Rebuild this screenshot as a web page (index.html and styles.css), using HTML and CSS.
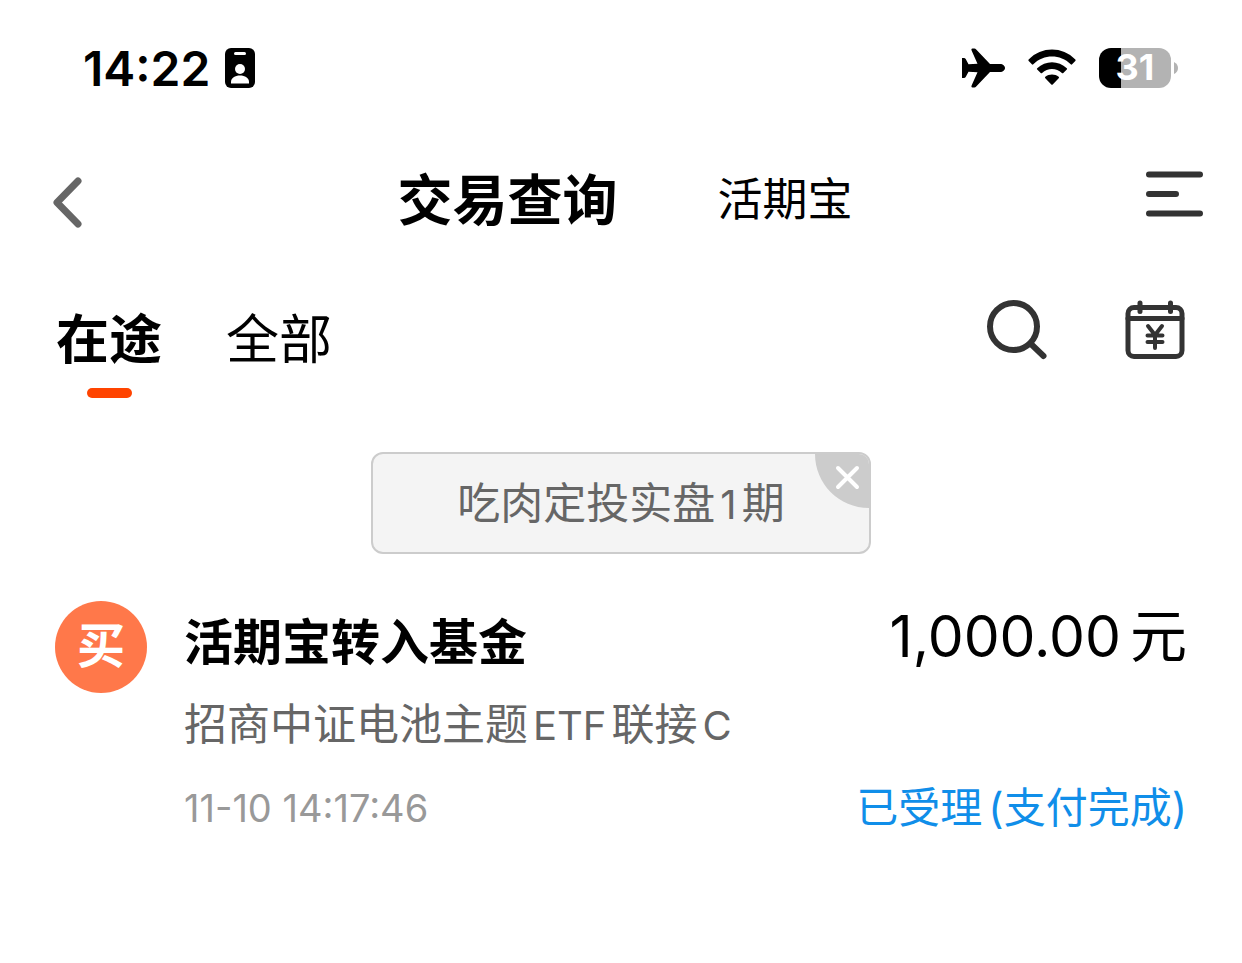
FILE: index.html
```html
<!DOCTYPE html>
<html lang="zh-CN">
<head>
<meta charset="utf-8">
<meta name="viewport" content="width=device-width, initial-scale=1">
<title>交易查询</title>
<link rel="stylesheet" href="styles.css">
</head>
<body>
<div class="status-bar">
  <div class="status-left">
    <time class="clock">14:22</time>
    <svg width="30" height="40" viewBox="0 0 30 40" aria-hidden="true">
      <rect width="30" height="40" rx="6"/>
      <rect x="9" y="4" width="12" height="3" rx="1.5" fill="#fff"/>
      <circle cx="15" cy="21" r="5" fill="#fff"/>
      <path d="M6 35.500V34c0-4 4-6.500 9-6.500s9 2.500 9 6.500v1.500z" fill="#fff"/>
    </svg>
  </div>
  <div class="status-right">
    <svg width="44" height="40" viewBox="0 0 44 40" aria-hidden="true">
      <path d="M1 10h2q1 0 1.700.9L7.500 16.200l9-.4L10.600 2.400Q9.800.5 11.400.5h2q1 0 1.800.9L29 16h10c3 0 5 2.100 5 4s-2 4-5 4H29L15.200 38.600q-.8.900-1.800.9h-2q-1.600 0-.8-1.900L16.500 24.200l-9-.4L4.700 29Q4 30 3 30H1z"/>
    </svg>
    <svg width="48" height="38" viewBox="0 0 48 38" aria-hidden="true">
      <path d="M.7 10.500C13.500-2.800 34.500-2.800 47.300 10.500q.7.700 0 1.400l-3.200 3.400q-.7.700-1.400 0C32.300 5 15.700 5 5.300 15.300q-.7.700-1.400 0L.7 11.900q-.7-.7 0-1.400z"/>
      <path d="M9.200 19.200c8.200-8 21.400-8 29.600 0q.7.700 0 1.400L35.300 24q-.7.700-1.400 0c-5.500-5.200-14.300-5.200-19.800 0q-.7.700-1.400 0l-3.500-3.400q-.7-.7 0-1.400z"/>
      <path d="M17.300 27.800c3.800-3.200 9.600-3.200 13.400 0q.7.700 0 1.400l-6 6.300q-.7.700-1.400 0l-6-6.300q-.7-.7 0-1.400z"/>
    </svg>
    <div class="battery">
      <div class="battery-body"><span>31</span></div>
      <svg width="4" height="12" viewBox="0 0 4 12" aria-hidden="true"><path d="M0 0q4 2 4 6t-4 6z" fill="#b3b3b3"/></svg>
    </div>
  </div>
</div>

<header class="nav">
  <button class="icon-button back" aria-label="返回">
    <svg width="30" height="52" viewBox="0 0 30 52" fill="none" stroke="#666" stroke-width="7" stroke-linecap="round" stroke-linejoin="round"><path d="M26 4 5 25.500 26 47"/></svg>
  </button>
  <div class="nav-titles">
    <h1>交易查询</h1>
    <a href="#">活期宝</a>
  </div>
  <button class="icon-button menu" aria-label="菜单">
    <svg width="58" height="46" viewBox="0 0 58 46" fill="none" stroke="#333" stroke-width="6" stroke-linecap="round"><path d="M3 3.500h51M3 23h27M3 42.500h51"/></svg>
  </button>
</header>

<div class="toolbar">
  <nav class="tabs">
    <button class="tab active">在途</button>
    <button class="tab">全部</button>
  </nav>
  <div class="tools">
    <button class="icon-button" aria-label="搜索">
      <svg width="62" height="60" viewBox="0 0 62 60" fill="none" stroke="#333" stroke-width="6" stroke-linecap="round"><circle cx="27.500" cy="26.500" r="23.500"/><path d="m45 44 12.500 12"/></svg>
    </button>
    <button class="icon-button" aria-label="交易日历">
      <svg width="60" height="60" viewBox="0 0 60 60" fill="none" stroke="#333" stroke-width="5" stroke-linecap="round"><rect x="3" y="7.500" width="54" height="49" rx="6"/><path d="M3 18.500h54M15 3v8.500M45.500 3v8.500"/><path stroke-width="4" d="m23 26 7 9 7-9M30 35v13M22.500 35.500h15M22.500 42h15"/></svg>
    </button>
  </div>
</div>

<main>
  <div class="chip">
    <button class="chip-label">吃肉定投实盘<span class="latin">1</span>期</button>
    <button class="chip-close" aria-label="关闭">
      <svg width="54" height="54" viewBox="0 0 54 54" fill="none"><path d="M0 0h54v54C24 54 0 30 0 0z" fill="#ccc"/><path d="m23 14 19 19M42 14 23 33" stroke="#fff" stroke-width="4" stroke-linecap="round"/></svg>
    </button>
  </div>

  <article class="record">
    <span class="badge">买</span>
    <div class="details">
      <div class="row summary">
        <h2>活期宝转入基金</h2>
        <span class="amount"><span>1,000.00</span><span class="unit">元</span></span>
      </div>
      <p class="fund">招商中证电池主题<span class="latin">ETF</span>联接<span class="latin">C</span></p>
      <div class="row">
        <time class="date">11-10 14:17:46</time>
        <span class="state"><span>已受理</span><span>(支付完成)</span></span>
      </div>
    </div>
  </article>
</main>
</body>
</html>
```
FILE: styles.css
```css
* {
  box-sizing: border-box;
}

body {
  margin: 0;
  background: #fff;
  color: #000;
  font-family: Inter, "Noto Sans CJK SC", sans-serif;
}

h1,
h2,
p {
  margin: 0;
}

button {
  margin: 0;
  padding: 0;
  border: 0;
  background: none;
  color: inherit;
  font: inherit;
  cursor: pointer;
}

svg {
  display: block;
}

.status-bar {
  display: flex;
  justify-content: space-between;
  align-items: center;
  height: 136px;
  padding: 0 64px 0 83px;
}

.status-left {
  display: flex;
  align-items: center;
  gap: 15px;
}

.clock {
  font-size: 48px;
  font-weight: 600;
}

.status-right {
  display: flex;
  align-items: center;
  gap: 23px;
}

.battery {
  display: flex;
  align-items: center;
  gap: 3px;
}

.battery-body {
  width: 72px;
  height: 40px;
  border-radius: 12px;
  background: linear-gradient(to right, #000 31%, #b3b3b3 31%);
  color: #fff;
  font-size: 36px;
  font-weight: 700;
  line-height: 38px;
  text-align: center;
}

.nav {
  display: grid;
  grid-template-columns: 1fr auto 1fr;
  align-items: center;
  height: 124px;
  padding: 0 38px 0 52px;
}

.back {
  justify-self: start;
  padding-top: 9px;
}

.menu {
  justify-self: end;
  padding-bottom: 9px;
}

.nav-titles {
  display: flex;
  align-items: center;
  gap: 100px;
  padding: 4px 6px 0 0;
}

.nav-titles h1 {
  font-size: 55px;
  font-weight: 700;
  line-height: 80px;
}

.nav-titles a {
  color: inherit;
  font-size: 45px;
  line-height: 80px;
  text-decoration: none;
}

.toolbar {
  display: flex;
  justify-content: space-between;
  align-items: flex-start;
  padding: 40px 57px 0 56px;
}

.tabs {
  display: flex;
  gap: 64px;
}

.tab {
  display: flex;
  flex-direction: column;
  align-items: center;
  gap: 10px;
  padding-top: 2px;
  font-size: 53px;
  line-height: 76px;
}

.tab.active {
  font-weight: 700;
}

.tab.active::after {
  content: "";
  width: 45px;
  height: 10px;
  border-radius: 5px;
  background: #ff4400;
}

.tools {
  display: flex;
  gap: 77px;
}

main {
  display: flex;
  flex-direction: column;
  padding: 54px 55px 0;
}

.chip {
  position: relative;
  align-self: center;
  overflow: hidden;
  border: 2px solid #ccc;
  border-radius: 12px;
  background: #f4f4f4;
}

.chip-label {
  display: block;
  padding: 0 84px;
  color: #666;
  font-size: 43px;
  line-height: 98px;
  white-space: nowrap;
}

.latin {
  margin: 0 5px;
  font-size: 40px;
  line-height: 1;
}

.chip-close {
  position: absolute;
  top: 0;
  right: 0;
}

.record {
  display: flex;
  gap: 37px;
  padding-top: 47px;
}

.badge {
  flex: none;
  width: 92px;
  height: 92px;
  border-radius: 50%;
  background: #ff784a;
  color: #fff;
  font-size: 48px;
  font-weight: 700;
  line-height: 90px;
  text-align: center;
}

.details {
  flex: 1;
}

.row {
  display: flex;
  justify-content: space-between;
  align-items: center;
}

.summary {
  align-items: flex-start;
}

.row h2 {
  font-size: 49px;
  font-weight: 700;
  line-height: 84px;
}

.amount {
  display: flex;
  gap: 9px;
  font-size: 57px;
  line-height: 72px;
}

.fund {
  padding-top: 4px;
  color: #666;
  font-size: 43px;
  line-height: 70px;
}

.date {
  color: #999;
  font-size: 38px;
}

.state {
  display: flex;
  gap: 6px;
  color: #108ee9;
  font-size: 42px;
  line-height: 98px;
}
```
